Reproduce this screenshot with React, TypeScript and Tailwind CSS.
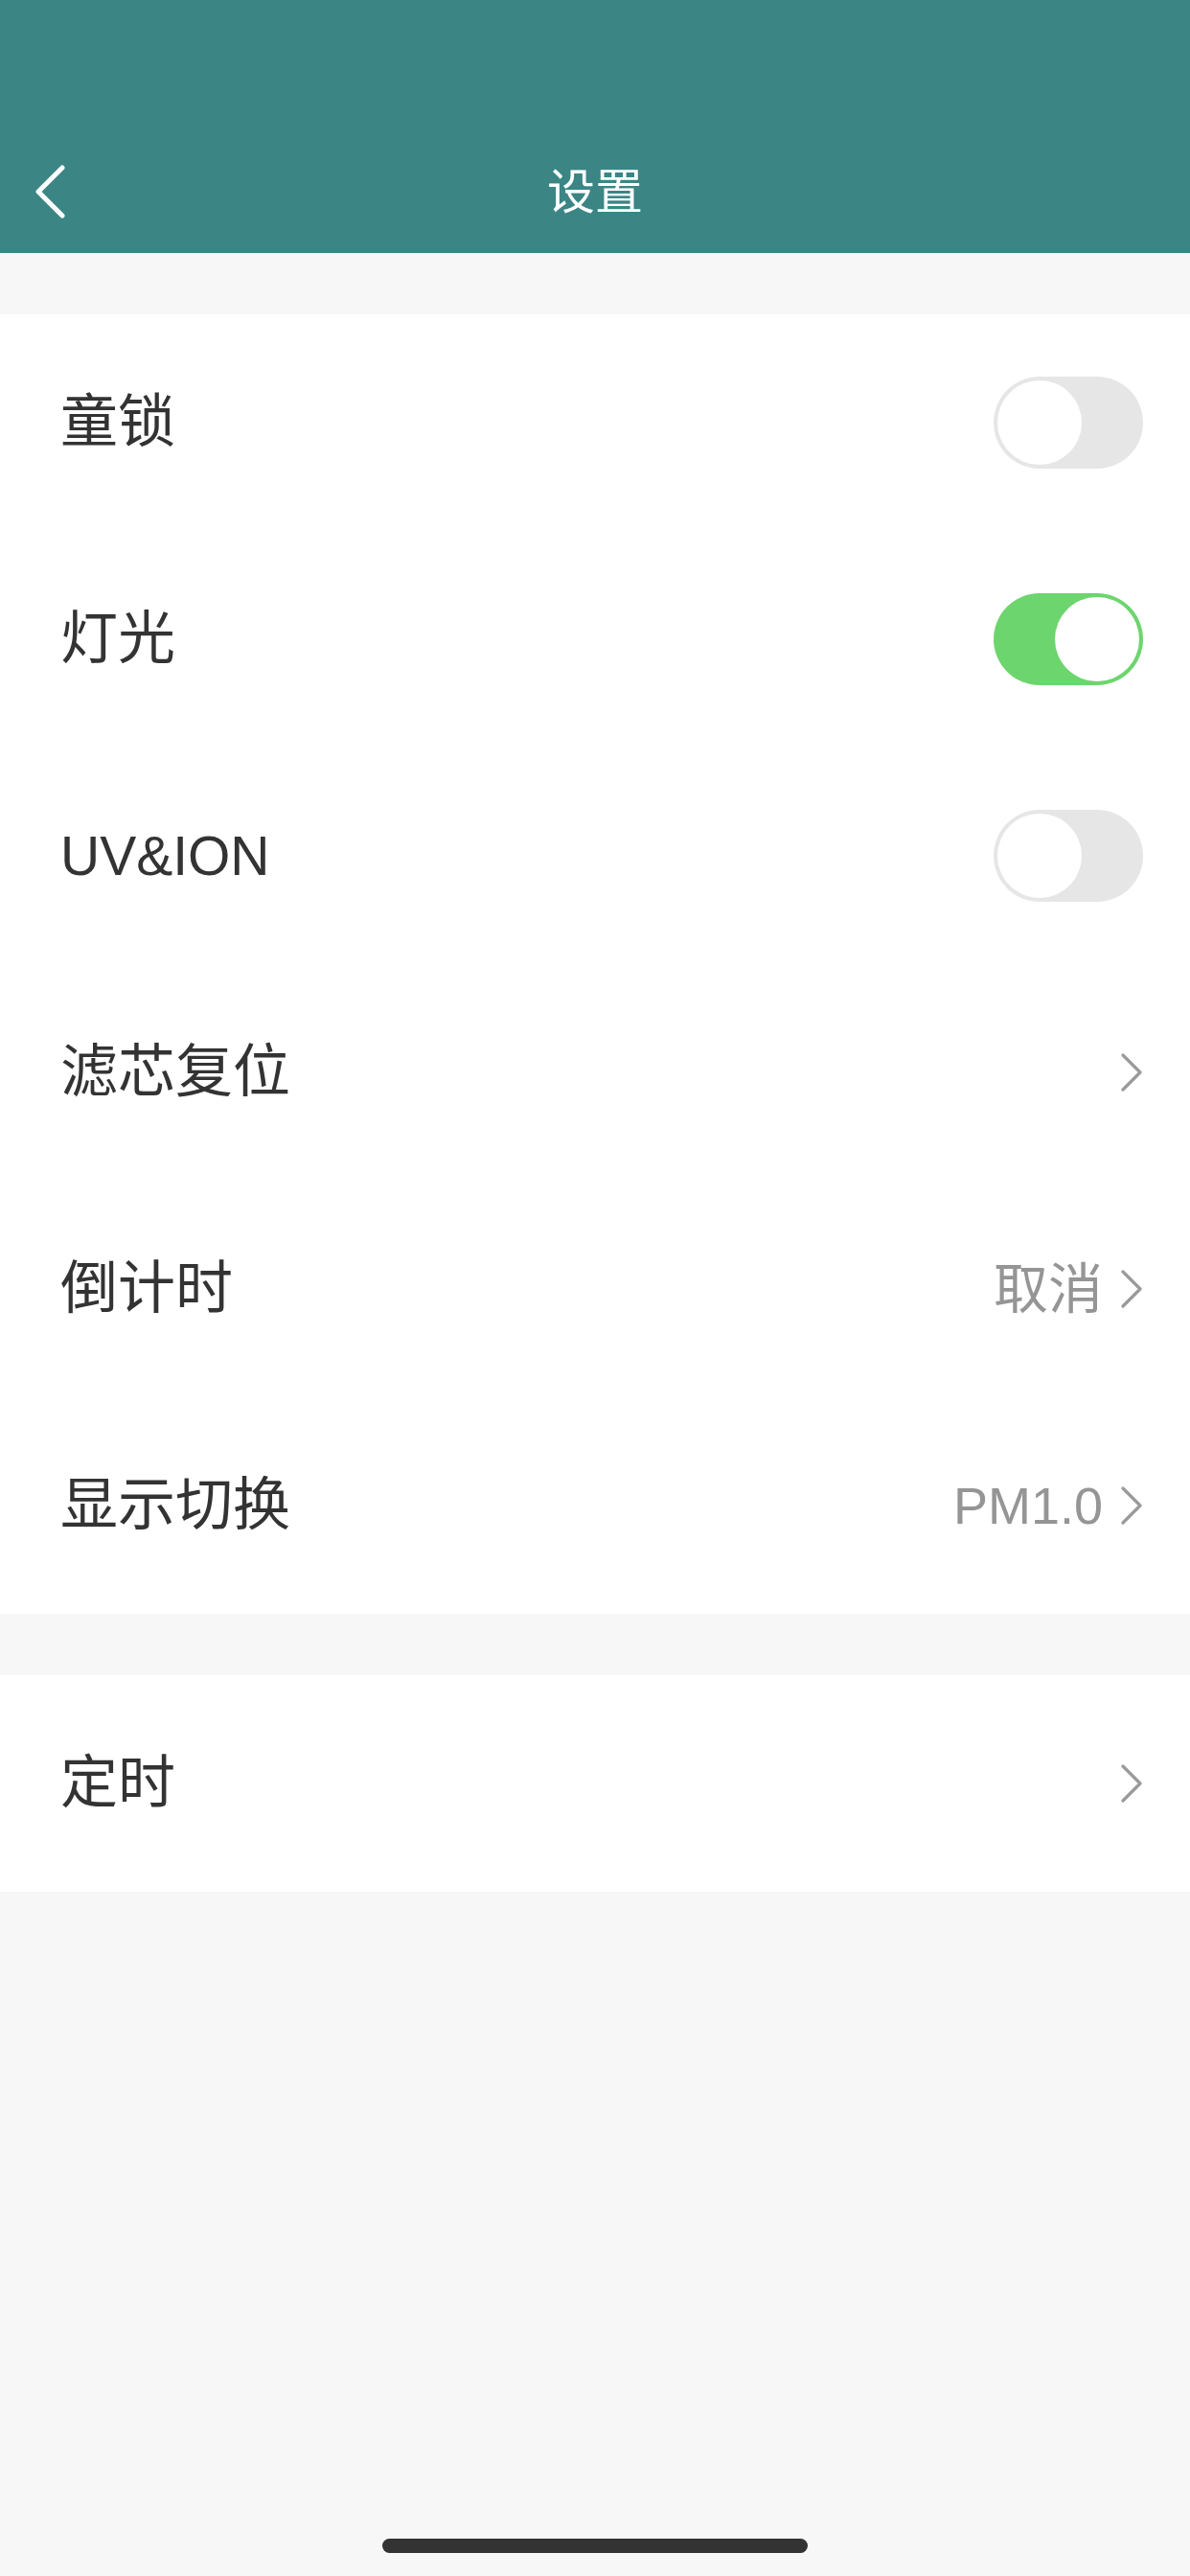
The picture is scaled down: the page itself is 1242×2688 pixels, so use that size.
import React, { useState } from 'react';

type Row =
  | { kind: 'toggle'; label: string; on: boolean }
  | { kind: 'link'; label: string; value?: string };

const ChevronRight = () => (
  <svg width="24" height="40" viewBox="0 0 24 40" fill="none">
    <path d="M3 2 L21 20 L3 38" stroke="#9a9a9a" strokeWidth="3.2" strokeLinecap="round" strokeLinejoin="round" />
  </svg>
);

const Toggle: React.FC<{ on: boolean; onChange: () => void }> = ({ on, onChange }) => (
  <button
    onClick={onChange}
    className={`w-[156px] h-[96px] rounded-full p-[4px] flex items-center ${on ? 'bg-[#6dd56e] justify-end' : 'bg-[#e6e6e6] justify-start'}`}
  >
    <span className="block w-[88px] h-[88px] rounded-full bg-white" />
  </button>
);

// latin-only labels are set a touch smaller than the CJK ones
const isLatin = (s: string) => /^[\x00-\x7f]+$/.test(s);

const App: React.FC = () => {
  const [rows, setRows] = useState<Row[]>([
    { kind: 'toggle', label: '童锁', on: false },
    { kind: 'toggle', label: '灯光', on: true },
    { kind: 'toggle', label: 'UV&ION', on: false },
    { kind: 'link', label: '滤芯复位' },
    { kind: 'link', label: '倒计时', value: '取消' },
    { kind: 'link', label: '显示切换', value: 'PM1.0' },
  ]);

  const flip = (i: number) =>
    setRows(prev => prev.map((r, j) => (j === i && r.kind === 'toggle' ? { ...r, on: !r.on } : r)));

  const renderRow = (row: Row, i: number, onFlip?: () => void) => (
    <div key={i} className="h-[226px] flex items-center justify-between pl-[63px] pr-[49px]">
      <span className={`${isLatin(row.label) ? 'text-[57px]' : 'text-[60px]'} leading-none text-[#333333]`}>{row.label}</span>
      {row.kind === 'toggle' ? (
        <Toggle on={row.on} onChange={onFlip ?? (() => {})} />
      ) : (
        <div className="flex items-center gap-[18px]">
          {row.value && (
            <span className={`${isLatin(row.value) ? 'text-[54px]' : 'text-[57px]'} leading-none text-[#959595]`}>{row.value}</span>
          )}
          <ChevronRight />
        </div>
      )}
    </div>
  );

  return (
    <div className="w-[1242px] h-[2688px] bg-[#f7f7f7] flex flex-col font-['Liberation_Sans','Noto_Sans_CJK_SC',sans-serif]">
      {/* Header */}
      <div className="h-[264px] bg-[#3b8585] flex flex-col justify-end">
        <div className="h-[132px] flex items-center relative pt-[4px]">
          <button className="pl-[36px] pr-4 h-full flex items-center">
            <svg width="34" height="56" viewBox="0 0 34 56" fill="none">
              <path d="M29 3 L4 28 L29 53" stroke="#ffffff" strokeWidth="5" strokeLinecap="round" strokeLinejoin="round" />
            </svg>
          </button>
          <div className="absolute inset-0 pt-[6px] flex items-center justify-center pointer-events-none">
            <span className="text-[50px] leading-none text-white">设置</span>
          </div>
        </div>
      </div>

      <div className="h-[64px]" />

      {/* Main settings */}
      <div className="bg-white">
        {rows.map((row, i) => renderRow(row, i, () => flip(i)))}
      </div>

      <div className="h-[64px]" />

      <div className="bg-white">
        {renderRow({ kind: 'link', label: '定时' }, 99)}
      </div>

      <div className="flex-1" />

      {/* Home indicator */}
      <div className="flex justify-center pb-[24px]">
        <div className="w-[444px] h-[15px] rounded-full bg-[#333333]" />
      </div>
    </div>
  );
};

export default App;
